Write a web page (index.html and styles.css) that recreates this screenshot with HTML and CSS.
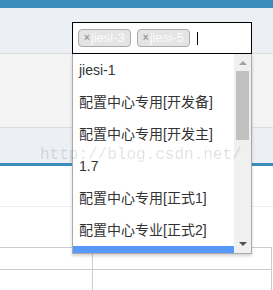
FILE: index.html
```html
<!DOCTYPE html>
<html lang="zh">
<head>
    <meta charset="UTF-8">
    <title>Select</title>
    <link rel="stylesheet" href="styles.css">
</head>
<body>
    <div class="page">
        <div class="topbar"></div>
        <div class="toolbar"></div>
        <div class="panel"></div>
        <div class="band"></div>
        <div class="content">
            <div class="divider"></div>
            <div class="grid">
                <div class="grid-row"><div class="cell"></div><div class="cell"></div></div>
                <div class="grid-row"><div class="cell"></div><div class="cell"></div></div>
            </div>
        </div>
    </div>

    <div class="select">
        <div class="choices">
            <span class="tag"><span class="tag-x">×</span>jiesi-3</span>
            <span class="tag"><span class="tag-x">×</span>jiesi-5</span>
            <span class="caret"></span>
        </div>
        <div class="dropdown">
            <ul class="options">
                <li>jiesi-1</li>
                <li>配置中心专用[开发备]</li>
                <li>配置中心专用[开发主]</li>
                <li>1.7</li>
                <li>配置中心专用[正式1]</li>
                <li>配置中心专业[正式2]</li>
                <li class="active"></li>
            </ul>
            <div class="scrollbar">
                <span class="arrow-up"></span>
                <span class="thumb"></span>
                <span class="arrow-down"></span>
            </div>
        </div>
    </div>

    <div class="watermark">http://blog.csdn.net/</div>
</body>
</html>
```

FILE: styles.css
```css
body {
    margin: 0;
    font-family: 'Liberation Sans', Arial, 'Noto Sans CJK SC', sans-serif;
    background-color: #fff;
    overflow: hidden;
}
.topbar {
    height: 8px;
    background-color: #3c8dbc;
}
.toolbar {
    height: 45px;
    background-color: #ecf0f5;
    border-bottom: 1px solid #dcdcdc;
}
.panel {
    height: 73px;
    background-color: #f4f4f4;
    border-bottom: 1px solid #dddddd;
}
.band {
    height: 35px;
    background-color: #ecf0f5;
    border-bottom: 3px solid #3c8dbc;
}
.divider {
    height: 40px;
    border-bottom: 1px solid #eeeeee;
}
.grid {
    margin-top: 40px;
    width: 271px;
    border-top: 1px solid #cccccc;
    border-right: 1px solid #cccccc;
}
.grid-row {
    display: grid;
    grid-template-columns: 92px 1fr;
    height: 21px;
    border-bottom: 1px solid #cccccc;
}
.cell + .cell {
    border-left: 1px solid #cccccc;
}

/* select widget, open */
.select {
    position: absolute;
    left: 72px;
    top: 22px;
    width: 180px;
}
.choices {
    height: 30px;
    border: 1px solid #000;
    background-color: #fff;
    display: flex;
    align-items: center;
    gap: 6px;
    padding: 0 5px;
}
.tag {
    display: flex;
    align-items: center;
    height: 16px;
    padding: 0 5px;
    border: 1px solid #aaaaaa;
    border-radius: 4px;
    background-color: #e4e4e4;
    color: #fbfbfb;
    font-size: 13px;
    line-height: 16px;
}
.tag-x {
    color: #999;
    font-size: 10px;
    font-weight: bold;
    margin-right: 1px;
}
.caret {
    width: 1px;
    height: 13px;
    background-color: #000;
    margin-left: 1px;
}
.dropdown {
    display: flex;
    height: 199px;
    border-left: 1px solid #aaaaaa;
    border-right: 1px solid #aaaaaa;
    border-bottom: 1px solid #aaaaaa;
    background-color: #fff;
    box-shadow: 0 2px 3px rgba(0, 0, 0, 0.18);
    overflow: hidden;
}
.options {
    flex: 1;
    margin: 0;
    padding: 0;
    list-style: none;
    overflow: hidden;
}
.options li {
    height: 32px;
    line-height: 32px;
    padding-left: 6px;
    font-size: 14px;
    color: #333;
    white-space: nowrap;
}
.options li.active {
    background-color: #5897fb;
}
.scrollbar {
    width: 17px;
    background-color: #f0f0f0;
    display: flex;
    flex-direction: column;
    align-items: center;
}
.arrow-up {
    margin-top: 7px;
    border-left: 4px solid transparent;
    border-right: 4px solid transparent;
    border-bottom: 4px solid #a3a3a3;
}
.thumb {
    width: 13px;
    height: 69px;
    margin-top: 6px;
    background-color: #c1c1c1;
}
.arrow-down {
    margin-top: auto;
    margin-bottom: 7px;
    border-left: 4px solid transparent;
    border-right: 4px solid transparent;
    border-top: 4px solid #505050;
}
.watermark {
    position: absolute;
    left: 40px;
    top: 146px;
    font-family: 'Liberation Mono', 'Courier New', monospace;
    font-size: 16px;
    color: rgba(0, 0, 0, 0.13);
    pointer-events: none;
}
```
